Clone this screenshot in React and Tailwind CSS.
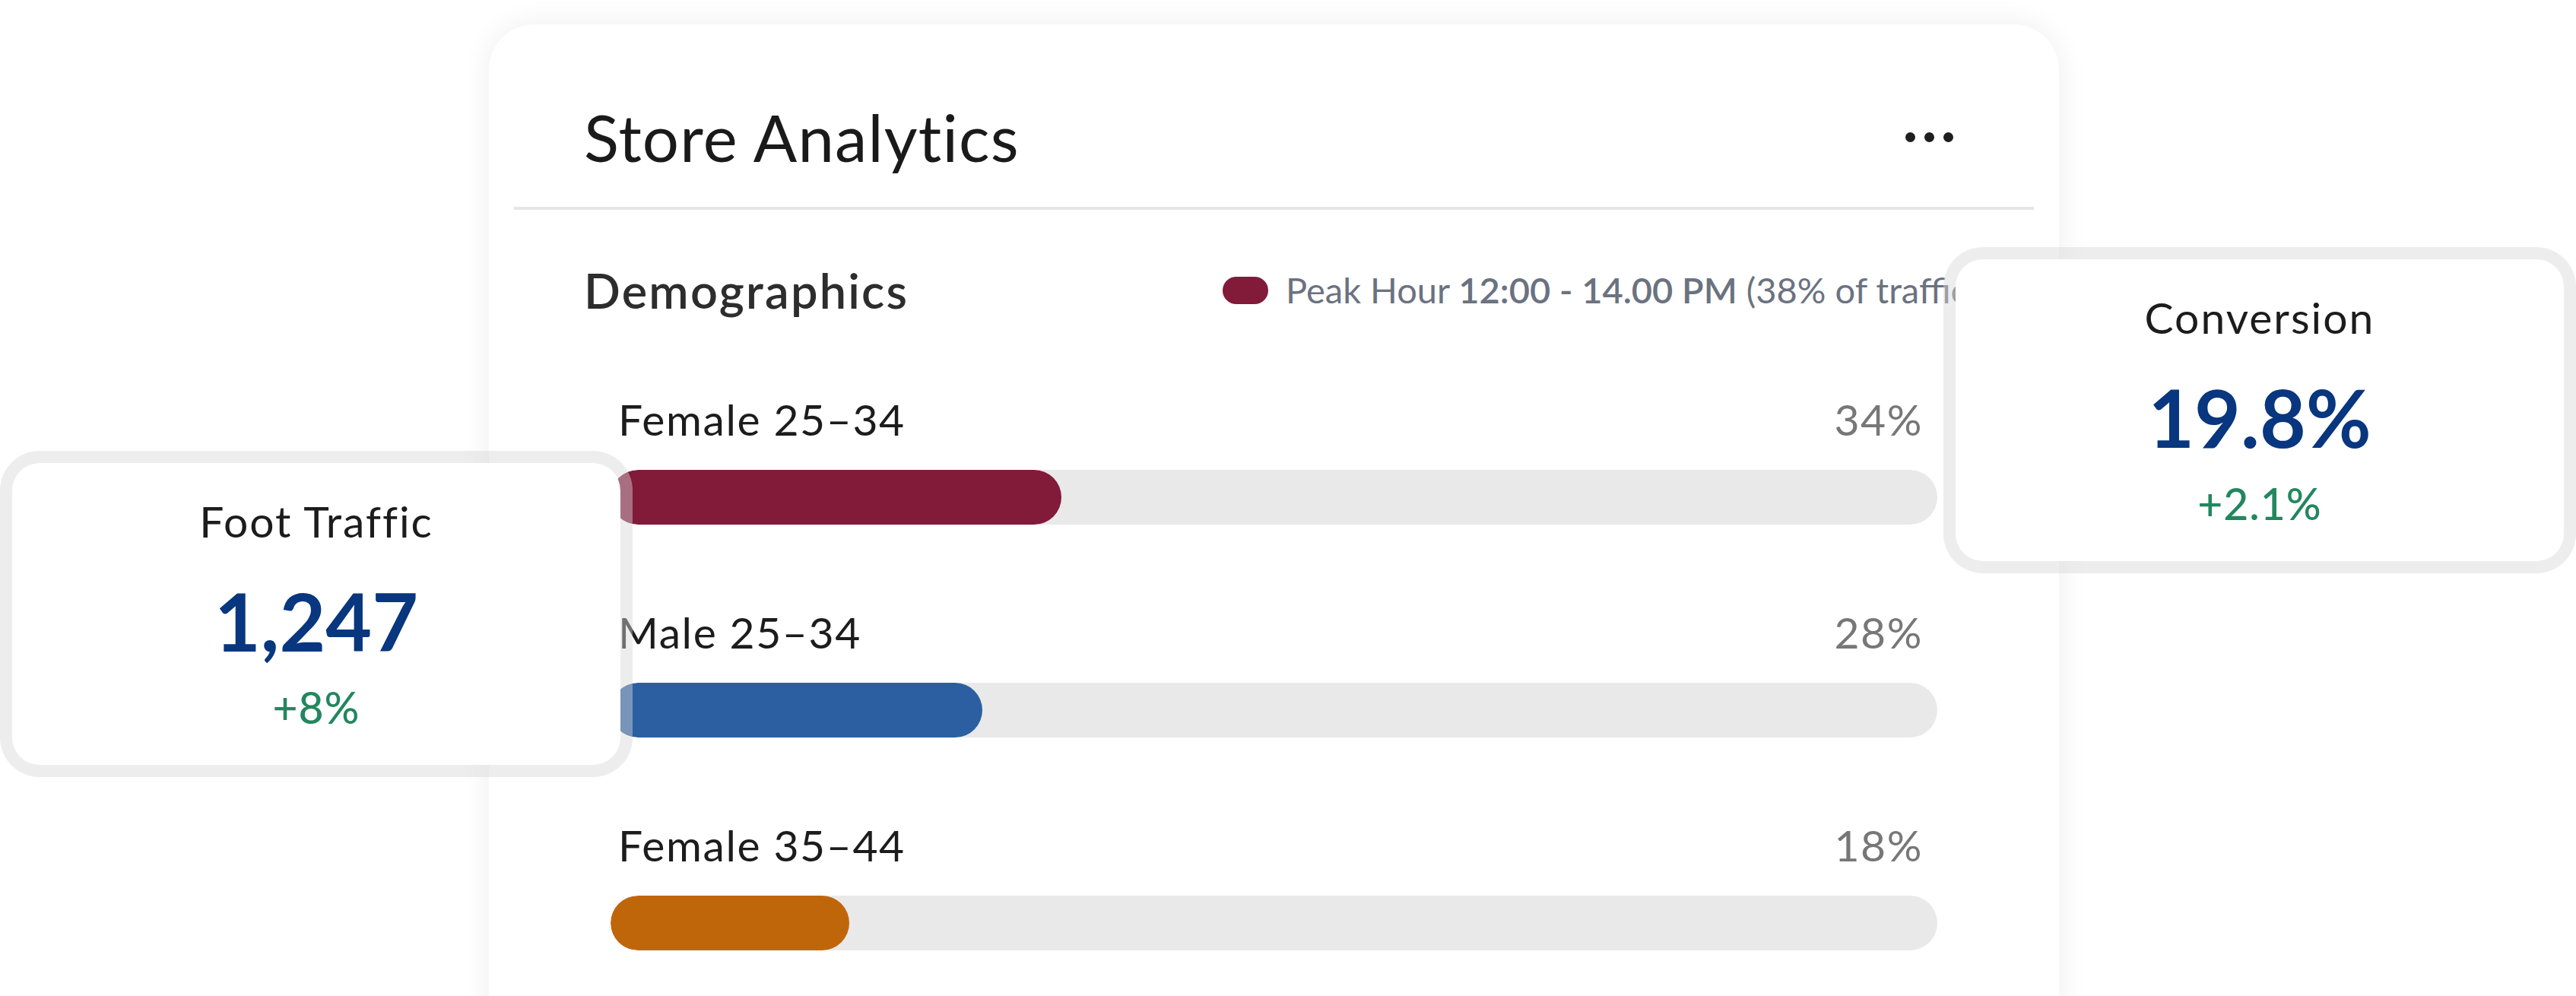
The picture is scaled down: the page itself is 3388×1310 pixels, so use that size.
import React from "react";

const rows = [
  { label: "Female 25–34", value: 34, color: "bg-[#821a3a]" },
  { label: "Male 25–34", value: 28, color: "bg-[#2b5fa1]" },
  { label: "Female 35–44", value: 18, color: "bg-[#c0660a]" },
];

function StatCard({ title, value, change, className }) {
  return (
    <div
      className={`absolute w-[832px] h-[429px] rounded-[52px] border-[16px] border-[#d6d6d6]/45 bg-white bg-clip-padding flex flex-col items-center pt-[48px] ${className}`}
    >
      <div className="text-[57px] leading-none tracking-[2px] text-[#1c1c1c]">{title}</div>
      <div className="mt-[50px] text-[105px] leading-none font-bold text-[#08367f]">
        {value}
      </div>
      <div className="mt-[33px] text-[57px] leading-none font-medium tracking-[1px] text-[#22875e]">
        {change}
      </div>
    </div>
  );
}

export default function App() {
  return (
    <div
      className="relative w-[3388px] h-[1310px] overflow-hidden bg-white"
      style={{ fontFamily: "Lato, 'Liberation Sans', sans-serif" }}
    >
      <div className="ml-[643px] mt-[32px] w-[2065px] rounded-[60px] bg-white shadow-[0_0_40px_rgba(0,0,0,0.07)] px-[33px] pb-[200px] overflow-hidden">
        {/* header */}
        <div className="flex items-center justify-between pl-[92px] pr-[106px] pt-[106px] pb-[49px]">
          <h1 className="text-[85px] leading-none tracking-[1.2px] text-[#1a1a1a]">Store Analytics</h1>
          <div className="flex items-center gap-[12px]">
            <span className="w-[13px] h-[13px] rounded-full bg-[#1e1e1e]" />
            <span className="w-[13px] h-[13px] rounded-full bg-[#1e1e1e]" />
            <span className="w-[13px] h-[13px] rounded-full bg-[#1e1e1e]" />
          </div>
        </div>
        <div className="h-[4px] bg-[#e6e6e6]" />

        {/* demographics */}
        <div className="flex items-center pl-[92px] mt-[74px] whitespace-nowrap">
          <h2 className="w-[840px] shrink-0 text-[63px] leading-none font-semibold tracking-[2.2px] text-[#2d2d2d]">
            Demographics
          </h2>
          <div className="flex items-center gap-[23px] text-[47px] leading-none text-[#6b7280]">
            <span className="w-[60px] h-[36px] rounded-full bg-[#821a3a] shrink-0" />
            <span>
              Peak Hour <span className="font-semibold">12:00 - 14.00 PM</span> (38% of traffic)
            </span>
          </div>
        </div>

        <div className="flex flex-col gap-[113px] px-[127px] mt-[110px]">
          {rows.map((r) => (
            <div key={r.label} className="flex flex-col gap-[38px]">
              <div className="flex items-center justify-between pl-[10px] pr-[19px] text-[57px] leading-none tracking-[1.6px]">
                <span className="text-[#1c1c1c]">{r.label}</span>
                <span className="text-[#777777]">{r.value}%</span>
              </div>
              <div className="h-[72px] rounded-full bg-[#e9e9e9] overflow-hidden">
                <div
                  className={`h-full rounded-full ${r.color}`}
                  style={{ width: `${r.value}%` }}
                />
              </div>
            </div>
          ))}
        </div>
      </div>

      <StatCard title="Foot Traffic" value="1,247" change="+8%" className="left-0 top-[593px]" />
      <StatCard title="Conversion" value="19.8%" change="+2.1%" className="left-[2556px] top-[325px]" />
    </div>
  );
}
